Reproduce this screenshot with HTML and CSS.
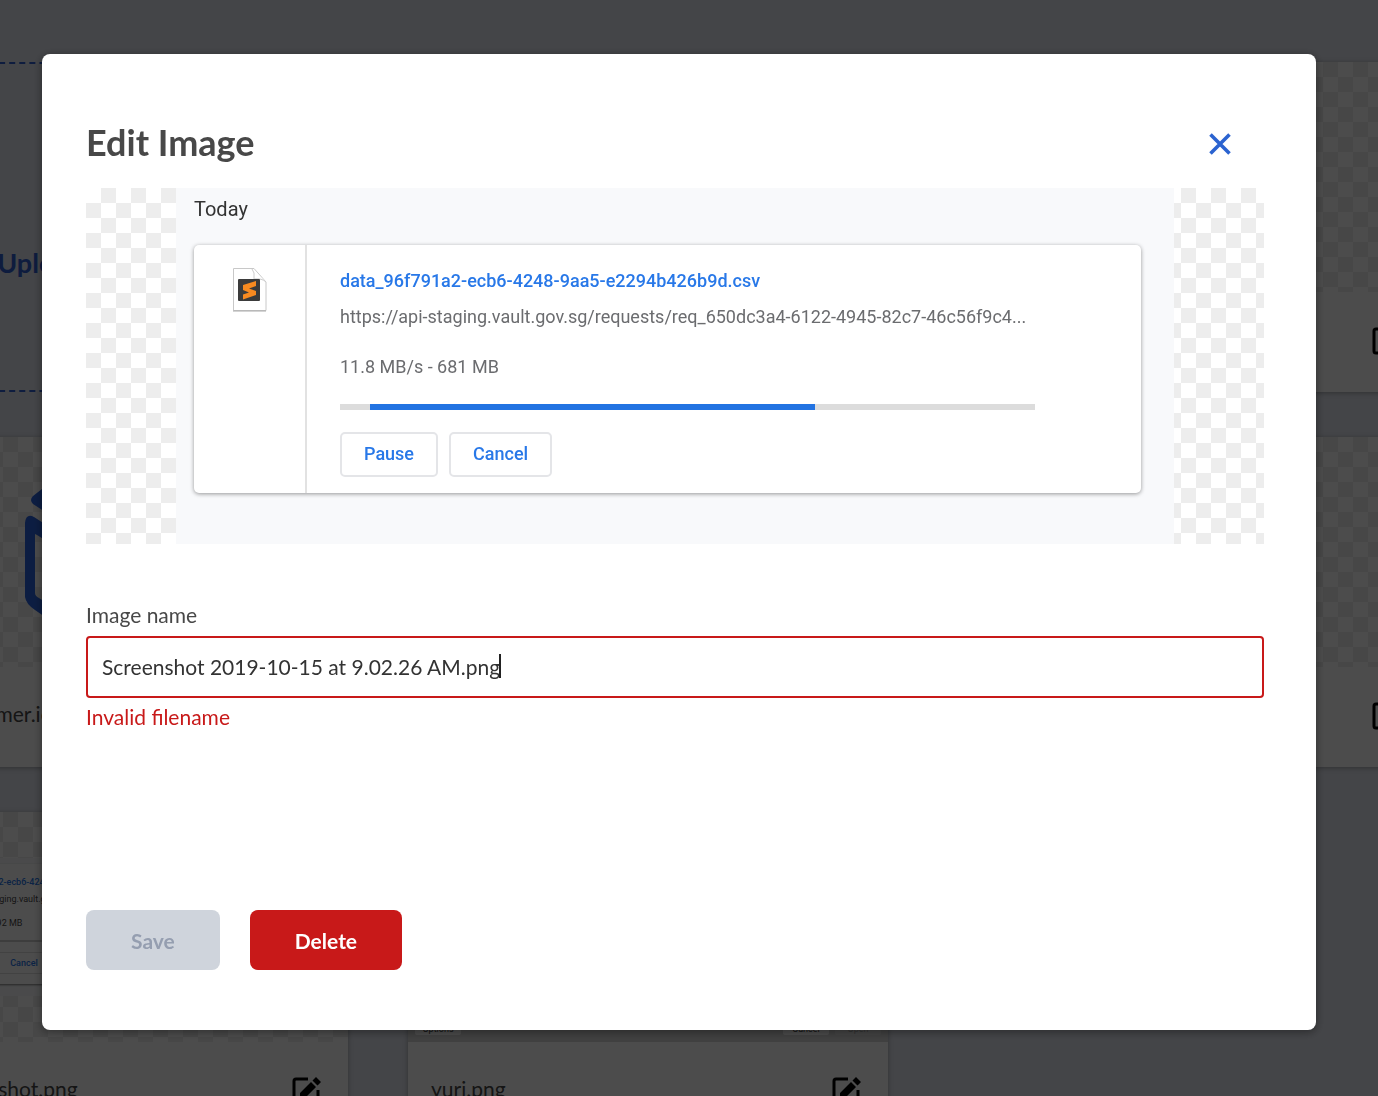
FILE: index.html
```html
<!DOCTYPE html>
<html lang="en">
<head>
<meta charset="utf-8">
<meta name="viewport" content="width=device-width, initial-scale=1">
<title>Edit Image</title>
<link rel="stylesheet" href="styles.css">
</head>
<body>
<svg class="sprite" aria-hidden="true">
  <symbol id="icon-edit" viewBox="0 0 30 30">
    <path d="M18 4H6Q4 4 4 6V26Q4 28 6 28H26Q28 28 28 26V15" transform="translate(-2 -1)" fill="none" stroke="currentColor" stroke-width="3"/>
    <path d="M8 23V17L19 6L24 11L13 22L8 23Z M20.500 4.500L24 1L29 6L25.500 9.500Z" fill="currentColor"/>
  </symbol>
</svg>

<main class="gallery">
  <button class="upload" type="button">Upload new image</button>
  <article class="card">
    <div class="card-preview checker"></div>
    <footer class="card-footer"></footer>
  </article>
  <article class="card">
    <div class="card-preview checker"></div>
    <footer class="card-footer"><span></span><svg class="edit-icon"><use href="#icon-edit"/></svg></footer>
  </article>

  <article class="card">
    <div class="card-preview checker">
      <svg class="logo" viewBox="0 0 170 170">
        <path d="M85 -24L19 22L10 29Q6 33 10 37L30 50L85 14L140 50L160 37Q164 33 160 29L151 22Z" fill="#2b63dc"/>
        <path d="M2 56Q3 46 11 50L85 98L159 50Q167 46 168 56L168 130Q167 140 160 145L90 190H80L12 143Q3 137 2 130ZM12 67V126Q12 129 16 131L78 172V108L14 68Z" fill="#2b63dc"/>
      </svg>
    </div>
    <footer class="card-footer"><span>primary-isomer.ico</span><svg class="edit-icon"><use href="#icon-edit"/></svg></footer>
  </article>
  <article class="card">
    <div class="card-preview checker"></div>
    <footer class="card-footer"></footer>
  </article>
  <article class="card">
    <div class="card-preview checker"></div>
    <footer class="card-footer"><span></span><svg class="edit-icon"><use href="#icon-edit"/></svg></footer>
  </article>

  <article class="card">
    <div class="card-preview checker">
      <div class="mini-download">
        <div class="mini-card">
          <b>data_96f791a2-ecb6-4248</b>
          <span>https://api-staging.vault.gov.sg</span>
          <span class="mini-size">11.8 MB/s - 692 MB</span>
          <div class="mini-bar"></div>
          <div class="mini-button">Cancel</div>
        </div>
      </div>
    </div>
    <footer class="card-footer"><span>new-screenshot.png</span><svg class="edit-icon"><use href="#icon-edit"/></svg></footer>
  </article>
  <article class="card">
    <div class="card-preview mini-dialog">
      <span class="mini-action">Options</span>
      <span class="mini-action mini-push">Cancel</span>
      <span class="mini-action mini-off">Open</span>
    </div>
    <footer class="card-footer"><span>yuri.png</span><svg class="edit-icon"><use href="#icon-edit"/></svg></footer>
  </article>
</main>

<div class="overlay">
  <section class="modal" role="dialog" aria-modal="true" aria-labelledby="modal-title">
    <header class="modal-header">
      <h1 id="modal-title">Edit Image</h1>
      <button class="close" type="button" aria-label="Close">
        <svg viewBox="0 0 22 22" width="22" height="22"><path d="M1.500 1.500L20.500 20.500M20.500 1.500L1.500 20.500" stroke="#2b63d0" stroke-width="3.600" fill="none"/></svg>
      </button>
    </header>

    <div class="preview checker">
      <div class="shot">
        <h2>Today</h2>
        <div class="download">
          <div class="download-icon">
            <svg viewBox="0 0 40 50" width="40" height="50">
              <path d="M4.500 4.500H25L37 18V46.500H4.500Z" fill="#fff" stroke="#c8c8c8"/>
              <path d="M4 47H37" stroke="#aaa"/>
              <path d="M23 5Q26 8 25 15Q33 14 37 18" fill="#fff" stroke="#ccc"/>
              <rect x="9" y="15" width="22" height="22" rx="1" fill="#3b3b3b"/>
              <path d="M14 21L27 17V22L20 24.500L27 27V31L14 35.500V30.500L20 28.500L14 26Z" fill="#f88a20"/>
            </svg>
          </div>
          <div class="download-body">
            <a class="download-name" href="#">data_96f791a2-ecb6-4248-9aa5-e2294b426b9d.csv</a>
            <p class="download-url">https://api-staging.vault.gov.sg/requests/req_650dc3a4-6122-4945-82c7-46c56f9c4...</p>
            <p class="download-size">11.8 MB/s - 681 MB</p>
            <div class="bar"><div class="bar-fill"></div></div>
            <div class="download-actions">
              <button type="button">Pause</button>
              <button type="button">Cancel</button>
            </div>
          </div>
        </div>
      </div>
    </div>

    <form class="form">
      <label for="image-name">Image name</label>
      <div class="field">
        <input id="image-name" type="text" value="Screenshot 2019-10-15 at 9.02.26 AM.png" aria-invalid="true" aria-describedby="name-error">
        <span class="caret"></span>
      </div>
      <p class="error" id="name-error">Invalid filename</p>
      <div class="actions">
        <button class="save" type="submit" disabled>Save</button>
        <button class="delete" type="button">Delete</button>
      </div>
    </form>
  </section>
</div>
</body>
</html>
```
FILE: styles.css
```css
* { box-sizing: border-box; }

body {
  margin: 0;
  font-family: Lato, "Liberation Sans", sans-serif;
  font-size: 21px;
  color: #484848;
  background: #e3e6f0;
}

h1, h2, p { margin: 0; }
button, input { font: inherit; }
.sprite { display: none; }

.checker {
  background: conic-gradient(#ededed 0 25%, #fff 0 50%, #ededed 0 75%, #fff 0) 0 0 / 30px 30px;
}

/* Gallery */
.gallery {
  display: grid;
  grid-template-columns: repeat(3, 480px);
  grid-auto-rows: 330px;
  gap: 45px 60px;
  height: 100vh;
  padding-top: 62px;
  margin-left: -132px;
  overflow: hidden;
}

.upload {
  padding: 70px 0 0;
  border: 2px dashed #2f5fd0;
  background: none;
  color: #2f5fd0;
  font-size: 27px;
  font-weight: 700;
}

.card {
  display: flex;
  flex-direction: column;
  background: #fff;
  box-shadow: 0 1px 5px rgba(0, 0, 0, 0.3);
}

.card-preview {
  display: flex;
  align-items: center;
  justify-content: center;
  height: 230px;
}

.card-footer {
  display: flex;
  flex: 1;
  align-items: center;
  justify-content: space-between;
  padding: 0 26px 2px 23px;
}
.card-footer span { padding-bottom: 6px; }

.edit-icon { width: 30px; height: 30px; color: #000; }
.logo { width: 170px; height: 170px; overflow: visible; }

.mini-download {
  width: 100%;
  padding: 6px 8px 12px;
  background: #f8f9fb;
  font-family: Roboto, sans-serif;
  font-size: 9px;
}

.mini-card {
  display: flex;
  flex-direction: column;
  height: 120px;
  padding: 12px 50px 0 67px;
  background: #fff;
  line-height: 12px;
  gap: 5px;
  box-shadow: 0 1px 2px rgba(0, 0, 0, 0.5);
}

.mini-card b { color: #2775e6; font-weight: 500; }
.mini-size { padding-top: 7px; }
.mini-bar { height: 2px; margin: 6px 0 5px; background: #ccc; }
.mini-button {
  width: 50px;
  margin-left: 56px;
  border: 1px solid #ddd;
  color: #2775e6;
  font-weight: 500;
  line-height: 20px;
  text-align: center;
}

.mini-dialog {
  align-items: flex-end;
  gap: 6px;
  padding: 7px;
  background: #d8d8d8;
  font-family: Roboto, sans-serif;
  font-size: 9px;
}

.mini-action {
  width: 46px;
  border-radius: 2px;
  background: #fff;
  line-height: 12px;
  text-align: center;
}
.mini-push { margin-left: auto; }
.mini-off { background: #e4e4e4; color: #aaa; }

/* Modal */
.overlay {
  position: fixed;
  inset: 0;
  padding: 54px 62px 66px 42px;
  overflow: auto;
  background: rgba(0, 0, 0, 0.7);
}

.modal {
  padding: 64px 52px 60px 44px;
  border-radius: 8px;
  background: #fff;
  box-shadow: 0 2px 10px rgba(0, 0, 0, 0.4);
}

.modal-header {
  display: flex;
  align-items: center;
  justify-content: space-between;
  height: 50px;
  padding-right: 33px;
  margin-bottom: 20px;
}

h1 { padding-bottom: 2px; font-size: 36px; line-height: 48px; }
.close {
  display: flex;
  padding: 2px 0 0;
  border: 0;
  background: none;
}

.preview {
  padding: 0 90px;
}

.shot {
  padding: 6px 33px 51px 18px;
  background: #f8f9fb;
  color: #6b6c6f;
  font-family: Roboto, sans-serif;
  font-size: 18px;
}

h2 {
  margin-bottom: 21px;
  color: #333;
  font-size: 20px;
  font-weight: 400;
  line-height: 30px;
}

.download {
  display: flex;
  border-radius: 5px;
  background: #fff;
  box-shadow: 0 1px 4px rgba(0, 0, 0, 0.4);
}

.download-icon {
  width: 113px;
  padding: 19px 0 0 35px;
  border-right: 2px solid #e2e2e2;
}

.download-body {
  flex: 1;
  padding: 24px 106px 16px 33px;
  line-height: 24px;
}

.download-name {
  color: #2878e8;
  font-weight: 500;
  text-decoration: none;
}

.download-url { margin-top: 12px; }
.download-size { margin-top: 26px; }
.bar {
  height: 6px;
  margin-top: 25px;
  background: #dcdcdc;
}
.bar-fill {
  width: 64%;
  height: 100%;
  margin-left: 30px;
  background: #2273e2;
}

.download-actions {
  display: flex;
  gap: 11px;
  margin-top: 22px;
}
.download-actions button {
  height: 45px;
  padding: 0 22px 2px;
  border: 2px solid #e4e5e8;
  border-radius: 5px;
  background: #fff;
  color: #2878e8;
  font-weight: 500;
}

.form { padding-top: 56px; }
.form label, .error {
  display: block;
  line-height: 30px;
}

.field {
  position: relative;
  margin-top: 6px;
}
.field input {
  display: block;
  width: 100%;
  height: 62px;
  padding: 0 14px 2px;
  border: 2px solid #c81919;
  border-radius: 4px;
  outline: none;
  background: #fff;
  color: #333;
}
.caret {
  position: absolute;
  top: 18px;
  left: 413px;
  width: 2px;
  height: 24px;
  background: #222;
}

.error { margin-top: 4px; color: #c81919; }

.actions {
  display: flex;
  gap: 30px;
  margin-top: 178px;
}
.actions button {
  height: 60px;
  padding: 0 45px;
  border: 0;
  border-radius: 8px;
  font-weight: 700;
}
.save { background: #cfd4dc; color: #959eb0; }
.delete { background: #c81919; color: #fff; }
```
